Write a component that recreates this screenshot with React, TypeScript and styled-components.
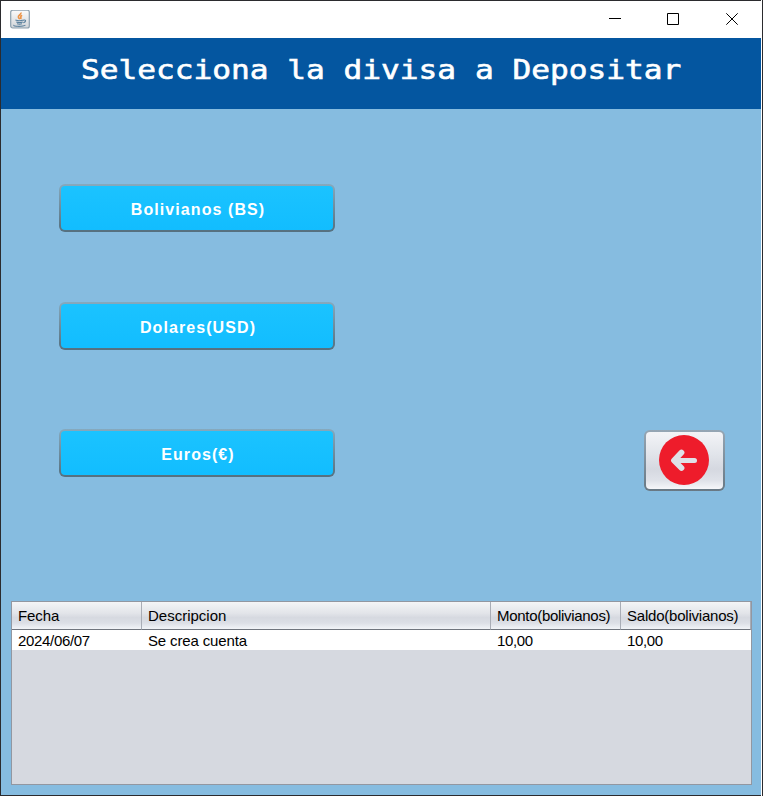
import React from "react";
import styled, { createGlobalStyle } from "styled-components";

const GlobalStyle = createGlobalStyle`
  *, *::before, *::after { box-sizing: border-box; }
  html, body { margin: 0; padding: 0; overflow: hidden; }
  body { font-family: "Liberation Sans", Arial, sans-serif; }
`;

const Frame = styled.div`
  width: 763px;
  height: 796px;
  padding: 1px 2px 1px 1px;
  background: linear-gradient(to right, #2b2b2e 761px, #ffffff 761px 762px, #2b2b2e 762px);
`;

const AppWindow = styled.div`
  display: flex;
  flex-direction: column;
  height: 794px;
  background: #86bce0;
`;

const TitleBar = styled.div`
  display: flex;
  align-items: center;
  justify-content: space-between;
  height: 37px;
  padding-left: 9px;
  margin-right: -1px;
  background: #ffffff;
`;

const Controls = styled.div`
  display: flex;
`;

const Control = styled.button`
  display: flex;
  align-items: center;
  justify-content: center;
  width: 58px;
  height: 37px;
  padding: 0 0 1px;
  border: 0;
  background: transparent;

  &:last-child { width: 60px; }
`;

const Banner = styled.header`
  display: flex;
  justify-content: center;
  height: 71px;
  background: #0456a0;
`;

const Heading = styled.h1`
  margin: 0;
  font: 400 27px/64px "DejaVu Sans Mono", monospace;
  color: #ffffff;
  white-space: pre;
  -webkit-text-stroke: 0.6px #ffffff;
  transform: scaleX(1.154);
`;

const Options = styled.main`
  display: flex;
  justify-content: space-between;
  align-items: flex-end;
  height: 383px;
  padding: 75px 36px 0 58px;
`;

const CurrencyList = styled.div`
  display: flex;
  flex-direction: column;
  height: 308px;
`;

const RaisedButton = styled.button`
  display: flex;
  align-items: center;
  justify-content: center;
  padding: 0;
  border: 2px solid transparent;
  border-radius: 6px;
`;

const CurrencyButton = styled(RaisedButton)<{ $gap: number }>`
  width: 276px;
  height: 48px;
  margin-bottom: ${(p) => p.$gap}px;
  padding-top: 4px;
  padding-left: 2px;
  background:
    linear-gradient(#1bc3ff, #12bdff) padding-box,
    linear-gradient(#86a9bd, #55707f) border-box;
  color: #ffffff;
  font: 700 16px/20px "Liberation Sans", Arial, sans-serif;
  letter-spacing: 1.08px;
`;

const BackButton = styled(RaisedButton)`
  width: 81px;
  height: 61px;
  margin-bottom: 1px;
  padding: 0 2px 2px 0;
  background:
    linear-gradient(#f3f4f7 0%, #e1e4ea 40%, #d5d8e0 65%, #dfe2e9 85%, #f6f7fa 100%) padding-box,
    linear-gradient(#95a6b4, #687884) border-box;
`;

const TableWrap = styled.section`
  width: 741px;
  height: 184px;
  margin: 109px 0 0 10px;
  border: 1px solid #9297a1;
  background: #d6d9e0;
`;

const Table = styled.table`
  width: 739px;
  table-layout: fixed;
  border-collapse: separate;
  border-spacing: 0;
  font: 400 15px/18px "Liberation Sans", Arial, sans-serif;
  color: #000000;
  text-align: left;
`;

const Column = styled.col<{ $width: number }>`
  width: ${(p) => p.$width}px;
`;

const HeaderCell = styled.th<{ $tracking: number }>`
  height: 28px;
  padding: 1px 0 0 6px;
  border-right: 1px solid #a9adb6;
  border-bottom: 1px solid #70757e;
  background: linear-gradient(#f4f5f7 0%, #e2e4e9 42%, #d6d9e0 58%, #dcdfe6 78%, #f2f4f8 100%);
  font-weight: 400;
  letter-spacing: ${(p) => p.$tracking}px;
  white-space: nowrap;
`;

const Cell = styled.td<{ $tracking: number }>`
  height: 20px;
  padding: 1px 0 0 6px;
  background: #ffffff;
  letter-spacing: ${(p) => p.$tracking}px;
  white-space: nowrap;
`;

const JavaIcon = () => (
  <svg width="20" height="20" viewBox="0 0 20 20">
    <defs>
      <linearGradient id="tile" x1="0" y1="0" x2="0" y2="1">
        <stop offset="0" stopColor="#fbfbfb" />
        <stop offset="1" stopColor="#d0d4d8" />
      </linearGradient>
    </defs>
    <rect x="0.7" y="0.2" width="18.6" height="17.8" rx="2" fill="url(#tile)" stroke="#8da0ae" strokeWidth="1.2" />
    <path d="M10.8 2.5c1 1.7-2.8 2.8-2.4 4.5.2 1 1.1 1.3.8 2.3M12.1 5.2C9.2 6.7 11.8 7.2 10.6 9.1" fill="none" stroke="#ec9448" strokeWidth="1.7" />
    <path d="M5.4 10c2 .8 5.9.7 8.3-.1M6.3 12c2 .6 4.5.6 6.5 0M7 13.7c1.7.5 3.5.5 5 0M13.6 10.1c3-.7 2.4 2-.3 2.6M4 15c-1.6 1.7 9 1.8 11.4.1" fill="none" stroke="#587f9c" strokeWidth="1.1" />
  </svg>
);

const BackIcon = () => (
  <svg width="52" height="52" viewBox="0 0 52 52">
    <circle cx="26" cy="26" r="25" fill="#ee1c2b" />
    <path d="M36.5 26.5H18" fill="none" stroke="#dfe1e7" strokeWidth="5" strokeLinecap="round" />
    <path d="M23.5 18.5L16 26.5L23.5 34" fill="none" stroke="#dfe1e7" strokeWidth="5.8" strokeLinecap="round" strokeLinejoin="round" />
  </svg>
);

const glyphs = [
  { label: "Minimizar", d: "M0 5.5H12" },
  { label: "Maximizar", d: "M0.5 0.5H11.5V11.5H0.5Z" },
  { label: "Cerrar", d: "M0.3 0.3L11.7 11.7M11.7 0.3L0.3 11.7" },
];

const currencies = [
  { name: "Bolivianos (BS)", gap: 70 },
  { name: "Dolares(USD)", gap: 79 },
  { name: "Euros(€)", gap: 0 },
];

const columns = [
  { title: "Fecha", width: 130, tracking: -0.1 },
  { title: "Descripcion", width: 349, tracking: 0 },
  { title: "Monto(bolivianos)", width: 130, tracking: -0.3 },
  { title: "Saldo(bolivianos)", width: 130, tracking: -0.22 },
];

const rows = [
  [
    { text: "2024/06/07", tracking: -0.32 },
    { text: "Se crea cuenta", tracking: -0.14 },
    { text: "10,00", tracking: -0.35 },
    { text: "10,00", tracking: -0.35 },
  ],
];

export default function App() {
  return (
    <>
      <GlobalStyle />
      <Frame>
        <AppWindow>
          <TitleBar>
            <JavaIcon />
            <Controls>
              {glyphs.map((g) => (
                <Control key={g.label} aria-label={g.label}>
                  <svg width="12" height="12" viewBox="0 0 12 12" fill="none" stroke="#000">
                    <path d={g.d} />
                  </svg>
                </Control>
              ))}
            </Controls>
          </TitleBar>
          <Banner>
            <Heading>Selecciona la divisa a Depositar</Heading>
          </Banner>
          <Options>
            <CurrencyList>
              {currencies.map((c) => (
                <CurrencyButton key={c.name} $gap={c.gap}>{c.name}</CurrencyButton>
              ))}
            </CurrencyList>
            <BackButton aria-label="Volver">
              <BackIcon />
            </BackButton>
          </Options>
          <TableWrap>
            <Table>
              <colgroup>
                {columns.map((c) => <Column key={c.title} $width={c.width} />)}
              </colgroup>
              <thead>
                <tr>
                  {columns.map((c) => (
                    <HeaderCell key={c.title} $tracking={c.tracking}>{c.title}</HeaderCell>
                  ))}
                </tr>
              </thead>
              <tbody>
                {rows.map((r, n) => (
                  <tr key={n}>
                    {r.map((v, i) => <Cell key={i} $tracking={v.tracking}>{v.text}</Cell>)}
                  </tr>
                ))}
              </tbody>
            </Table>
          </TableWrap>
        </AppWindow>
      </Frame>
    </>
  );
}
